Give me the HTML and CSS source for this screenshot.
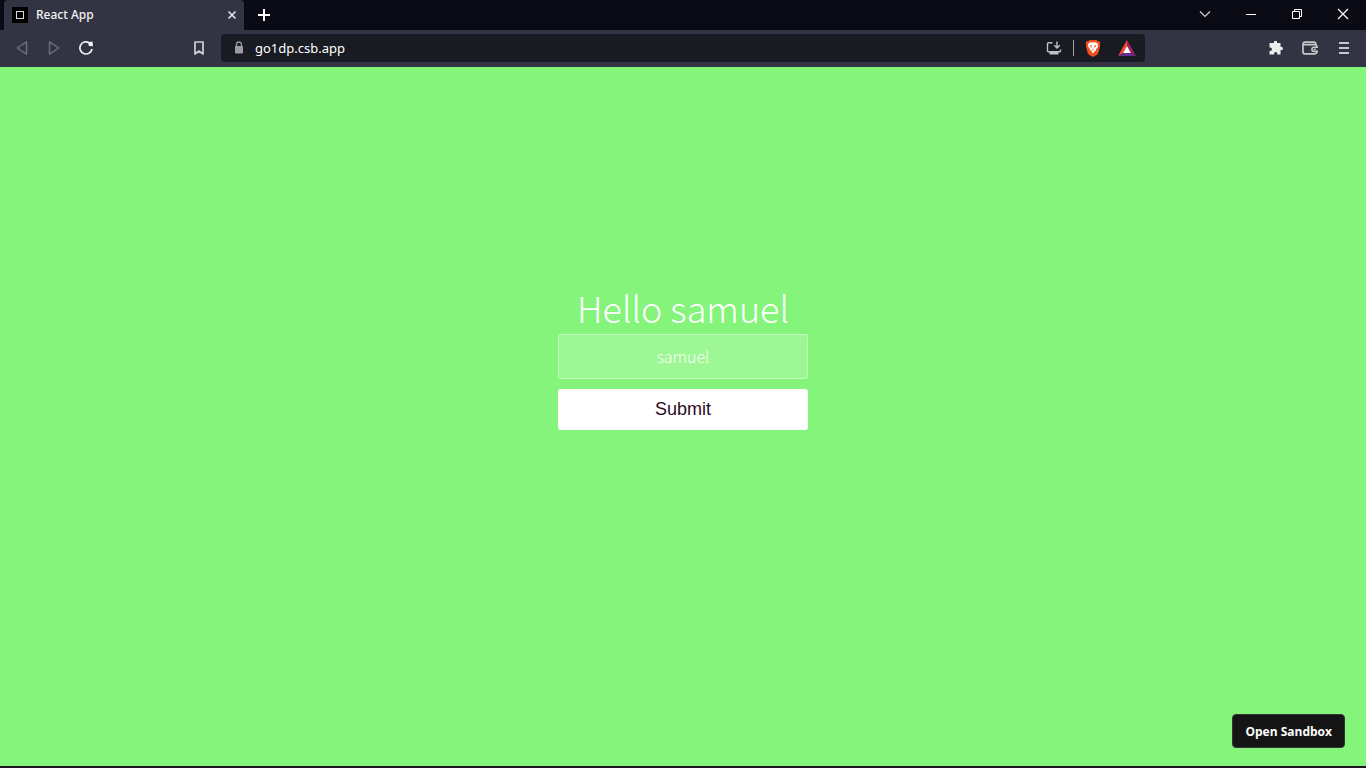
FILE: index.html
```html
<!DOCTYPE html>
<html lang="en">
<head>
<meta charset="utf-8">
<meta name="viewport" content="width=device-width, initial-scale=1">
<title>React App</title>
<link rel="stylesheet" href="styles.css">
</head>
<body>
<div class="window">
  <header class="browser">
    <div class="tabstrip">
      <div class="tab">
        <svg class="favicon" width="16" height="16" viewBox="0 0 16 16" aria-hidden="true"><rect width="16" height="16" fill="#000"/><rect x="4.5" y="4.5" width="7" height="7" fill="none" stroke="#d8d8d8"/></svg>
        <span class="tab-title">React App</span>
        <button class="icon-button tab-close" aria-label="Close tab"><svg width="16" height="16" viewBox="0 0 16 16"><path d="M4.5 4.5l7 7M11.500 4.500l-7 7" stroke="#e6e6e8" stroke-width="1.600"/></svg></button>
      </div>
      <button class="icon-button new-tab" aria-label="New tab"><svg width="16" height="16" viewBox="0 0 16 16"><path d="M2 8h12M8 2v12" stroke="#fff" stroke-width="2"/></svg></button>
      <div class="window-controls">
        <button class="window-button" aria-label="Search tabs"><svg width="12" height="12" viewBox="0 0 12 12"><path d="M1 3.500l5 5 5-5" fill="none" stroke="#d0d0d3" stroke-width="1.200"/></svg></button>
        <button class="window-button" aria-label="Minimize"><svg width="12" height="12" viewBox="0 0 12 12"><path d="M1 6.500h10" stroke="#fff"/></svg></button>
        <button class="window-button" aria-label="Restore"><svg width="12" height="12" viewBox="0 0 12 12"><path d="M1.500 3.500h7v7h-7zM3.500 3.500v-2h7v7h-2" fill="none" stroke="#fff"/></svg></button>
        <button class="window-button" aria-label="Close"><svg width="12" height="12" viewBox="0 0 12 12"><path d="M1 1l10 10M11 1L1 11" stroke="#fff" stroke-width="1.200"/></svg></button>
      </div>
    </div>
    <div class="toolbar">
      <nav class="history" aria-label="History">
        <button class="icon-button" aria-label="Back"><svg width="16" height="16" viewBox="0 0 16 16"><path d="M12.500 1.800v12.400L3.200 8z" fill="none" stroke="#6b6d79" stroke-width="1.500" stroke-linejoin="round"/></svg></button>
        <button class="icon-button" aria-label="Forward"><svg width="16" height="16" viewBox="0 0 16 16"><path d="M3.500 1.800v12.400L12.800 8z" fill="none" stroke="#6b6d79" stroke-width="1.500" stroke-linejoin="round"/></svg></button>
        <button class="icon-button" aria-label="Reload"><svg width="16" height="16" viewBox="0 0 16 16"><path d="M11.200 2.700A6.100 6.100 0 1 0 14 9" fill="none" stroke="#f2f2f3" stroke-width="1.700"/><path d="M10.200 2.300l4.300-.7.500 4.600-4.200-.3z" fill="#f2f2f3"/></svg></button>
      </nav>
      <button class="icon-button bookmark" aria-label="Bookmark this page"><svg width="16" height="16" viewBox="0 0 16 16"><path d="M4 2h8v12l-4-3-4 3z" fill="none" stroke="#d0d0d3" stroke-width="1.700" stroke-linejoin="round"/></svg></button>
      <div class="address-bar">
        <svg width="16" height="16" viewBox="0 0 16 16" aria-hidden="true"><rect x="4" y="6" width="8" height="7.500" rx=".8" fill="#9a9ca5"/><path d="M5.500 6V4.500a2.500 2.500 0 0 1 5 0V6" fill="none" stroke="#9a9ca5" stroke-width="1.300"/></svg>
        <input class="address" type="text" aria-label="Address" value="go1dp.csb.app">
        <button class="icon-button" aria-label="Install app"><svg width="16" height="16" viewBox="0 0 16 16"><path d="M6.500 2.700H2.500a1 1 0 0 0-1 1v7a1 1 0 0 0 1 1h11a1 1 0 0 0 1-1V9.500M11 1.500v6M8.200 5.200L11 8l2.800-2.800" fill="none" stroke="#bfc0c2" stroke-width="1.400"/><path d="M3.500 12h9v2.500h-9z" fill="#bfc0c2"/></svg></button>
        <span class="divider"></span>
        <button class="icon-button shields" aria-label="Brave Shields"><svg width="18" height="18" viewBox="0 0 18 20"><path d="M5.200 1h7.600l1.500 1.500 1.500-.2L17.200 4l-.6 1.800.4 1.300-2 8.100c-.3 1-.8 1.600-1.600 2.200L9 20l-4.400-2.600c-.8-.6-1.300-1.200-1.600-2.200L1 7.100l.4-1.300L.8 4l1.400-1.700 1.500.2z" fill="#f1501b"/><path d="M5.800 3.700L7.500 4l1.500-.4 1.500.4 1.700-.3 2.400 2.400-.4 1.400.4 1-2.300 2.900.3 1.300-1.700.8-.6-.5-.4.500 1 .8L9 15.900l-1.900-2 1-.8-.4-.5-.6.5-1.700-.8.3-1.300-2.300-2.900.4-1-.4-1.400z" fill="#fff"/><path d="M5.200 6.900l2.400.2-.5 1 .8 1.900-1.700-1.200zM12.800 6.900l-2.400.2.500 1-.8 1.900 1.700-1.200zM7.700 11.500L9 11l1.300.5L9 12.200z" fill="#f1501b"/></svg></button>
        <button class="icon-button rewards" aria-label="Brave Rewards"><svg width="18" height="16" viewBox="0 0 18 16"><path d="M9 0L0 16l5.200-3L9 6z" fill="#ff4724"/><path d="M9 0l9 16-5.200-3L9 6z" fill="#9e1f63"/><path d="M0 16h18l-5.200-3H5.200z" fill="#662d91"/><path d="M9 6l3.900 7H5.100z" fill="#fff"/></svg></button>
      </div>
      <div class="tools">
        <button class="icon-button" aria-label="Extensions"><svg width="16" height="16" viewBox="0 0 16 16"><path d="M2 3h3.800V2.400a1.700 1.700 0 0 1 3.400 0V3h3.300v3.700h.7a1.800 1.800 0 0 1 0 3.600h-.7v4.200H9.300v-1a1.600 1.600 0 0 0-3.200 0v1H1.500v-3.600h.8a1.700 1.700 0 0 0 0-3.400h-.8V3z" fill="#ececed"/></svg></button>
        <button class="icon-button" aria-label="Wallet"><svg width="18" height="16" viewBox="0 0 18 16"><path d="M2 4.600h12a1.800 1.800 0 0 1 1.800 1.800v5.600a1.800 1.800 0 0 1-1.800 1.800H3.800A1.800 1.800 0 0 1 2 12V4a1.800 1.800 0 0 1 1.800-1.800h9.400A1.500 1.500 0 0 1 14.700 3.700v1" fill="none" stroke="#c7c7cb" stroke-width="1.700"/><path d="M17 7.200h-4a2.100 2.100 0 0 0 0 4.200h4" fill="#323443" stroke="#c7c7cb" stroke-width="1.600"/><path d="M12.800 9.300h2" stroke="#c7c7cb" stroke-width="1.400"/></svg></button>
        <button class="icon-button" aria-label="Menu"><svg width="16" height="16" viewBox="0 0 16 16"><path d="M3 3h10M3 8h10M3 13h10" stroke="#c7c7cb" stroke-width="2"/></svg></button>
      </div>
    </div>
  </header>
  <main class="page">
    <form class="greeting">
      <h1 class="heading">Hello samuel</h1>
      <input class="name-field" type="text" aria-label="Name" value="samuel">
      <button class="submit" type="button">Submit</button>
    </form>
    <a class="sandbox-link" href="#">Open Sandbox</a>
  </main>
  <div class="taskbar"></div>
</div>
</body>
</html>
```

FILE: styles.css
```css
* { box-sizing: border-box; }
body { margin: 0; font-family: "Noto Sans", sans-serif; }
button, input { font: inherit; }
svg { display: block; flex: none; }

.window { display: flex; flex-direction: column; min-height: 100vh; }

.tabstrip { display: flex; height: 30px; padding-left: 4px; background: #0a0a14; }
.tab { display: flex; align-items: center; gap: 8px; width: 240px; padding: 0 4px 0 8px; border-radius: 4px 4px 0 0; background: #323443; }
.tab-title { flex: 1; padding-bottom: 1px; color: #f2f2f3; font-size: 12px; font-weight: 500; }
.icon-button { display: flex; align-items: center; justify-content: center; flex: none; padding: 0; border: 0; background: none; }
.new-tab { width: 40px; }
.window-controls { display: flex; margin-left: auto; }
.window-button { display: flex; align-items: center; justify-content: center; width: 46px; padding: 0 0 2px; border: 0; background: none; }

.toolbar { display: flex; align-items: center; height: 37px; padding: 0 14px 1px; background: #323443; }
.history { display: flex; gap: 16px; }
.bookmark { margin: 0 14px 0 97px; }
.address-bar { display: flex; align-items: center; flex: 1; height: 28px; padding: 0 9px 0 10px; border-radius: 4px; background: #191b22; }
.address { flex: 1; min-width: 0; padding: 0 8px; border: 0; outline: 0; background: none; color: #fff; font-size: 13px; }
.divider { width: 1px; height: 16px; margin: 0 10px 0 11px; background: #a5a6aa; }
.rewards { margin-left: 16px; }
.tools { display: flex; gap: 17px; margin-left: 123px; }

.page { position: relative; display: flex; flex: 1; align-items: center; justify-content: center; background: #84f57a; }
.greeting { display: flex; flex-direction: column; width: 250px; margin-bottom: 120px; }
.heading { margin: 0; padding-bottom: 4px; color: #fff; font-family: "Noto Sans CJK JP", sans-serif; font-size: 36px; font-weight: 200; line-height: 46px; text-align: center; white-space: nowrap; }
.name-field { width: 100%; height: 45px; margin-bottom: 10px; border: 1px solid rgba(255, 255, 255, 0.4); border-radius: 3px; outline: 0; background: rgba(255, 255, 255, 0.2); color: #fff; font-family: "Noto Sans CJK JP", sans-serif; font-size: 16px; font-weight: 300; text-align: center; }
.submit { height: 41px; padding: 0 15px; border: 0; border-radius: 3px; background: #fff; color: #2c0a25; font-family: "Liberation Sans", sans-serif; font-size: 18px; }
.sandbox-link { position: absolute; right: 21px; bottom: 18px; padding: 2px 12px 0; border: 1px solid #343434; border-radius: 4px; background: #151515; color: #fff; font-family: "Open Sans", sans-serif; font-size: 12px; font-weight: 700; line-height: 30px; text-decoration: none; }
.taskbar { height: 2px; background: #20161f; }
```
